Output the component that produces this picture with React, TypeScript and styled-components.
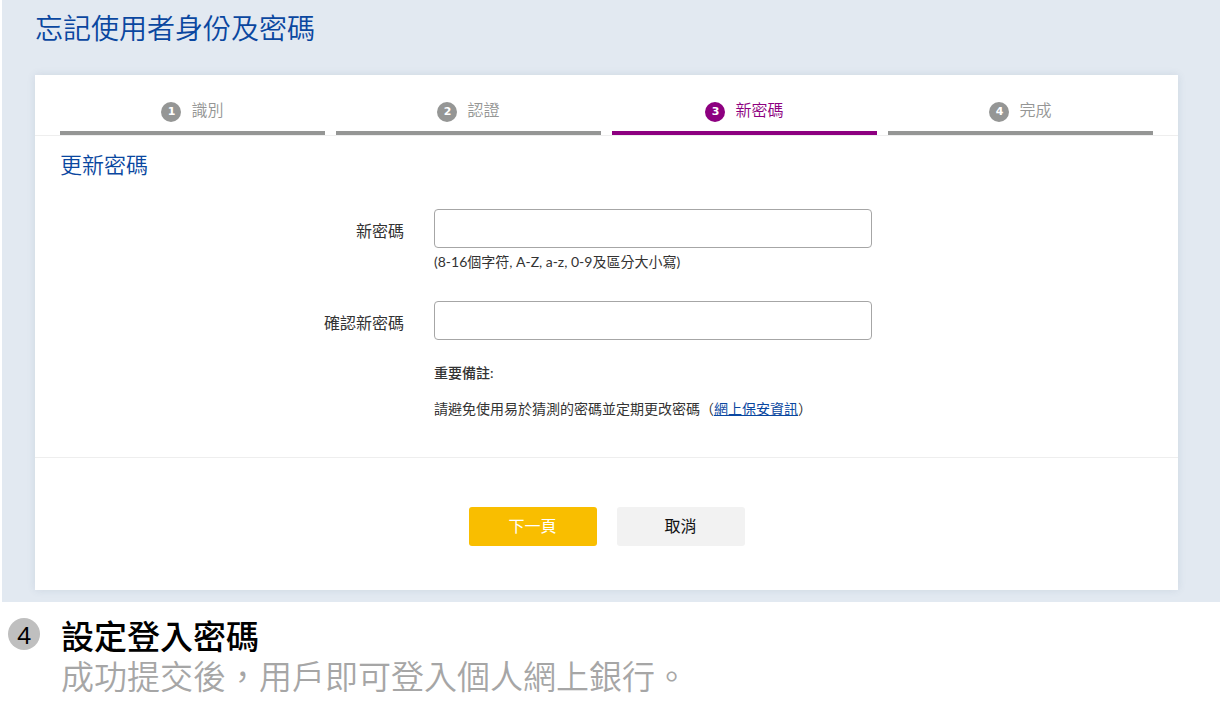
import React from 'react';
import styled, { createGlobalStyle } from 'styled-components';

const GlobalStyle = createGlobalStyle`
  *, *::before, *::after {
    box-sizing: border-box;
  }
  body {
    margin: 0;
    background: #ffffff;
    color: #333333;
    font-family: Lato, "Noto Sans CJK TC", sans-serif;
    font-size: 14px;
    line-height: 20px;
  }
`;

const Screen = styled.main`
  margin-left: 2px;
  padding: 8px 42px 12px 33px;
  background: #e2e9f1;
`;

const PageTitle = styled.h1`
  margin: 0 0 27px;
  color: #0a47a0;
  font-size: 28px;
  font-weight: 350;
  line-height: 40px;
`;

const Card = styled.form`
  background: #ffffff;
  box-shadow: 0 0 8px rgba(60, 90, 120, 0.12);
`;

const Steps = styled.ol`
  display: grid;
  grid-template-columns: repeat(4, 1fr);
  gap: 11px;
  margin: 0;
  padding: 0 25px;
  border-bottom: 1px solid #eeeeee;
  list-style: none;
`;

const Step = styled.li<{ $active?: boolean }>`
  display: flex;
  justify-content: center;
  gap: 10px;
  height: 60px;
  padding-top: 25px;
  border-bottom: 4px solid ${(p) => (p.$active ? '#8d0080' : '#959695')};
  color: ${(p) => (p.$active ? '#8d0080' : '#959695')};
  font-size: 16px;
  font-weight: 350;
`;

const StepNumber = styled.span<{ $active?: boolean }>`
  width: 20px;
  height: 20px;
  margin-top: 2px;
  border-radius: 50%;
  background: ${(p) => (p.$active ? '#8d0080' : '#959695')};
  color: #ffffff;
  font-family: "DejaVu Sans", sans-serif;
  font-size: 11px;
  font-weight: 700;
  line-height: 19px;
  text-align: center;
`;

const Body = styled.div`
  padding: 13px 25px 38px;
`;

const Heading = styled.h2`
  margin: 0 0 28px;
  color: #0a47a0;
  font-size: 22px;
  font-weight: 350;
  line-height: 32px;
`;

const Row = styled.div`
  display: grid;
  grid-template-columns: 344fr 438fr 251fr;
  column-gap: 30px;
`;

const FieldLabel = styled.label`
  padding-top: 12px;
  font-size: 16px;
  text-align: right;
`;

const PasswordInput = styled.input`
  display: block;
  width: 100%;
  height: 39px;
  padding: 0 12px;
  border: 1px solid #a6a6a6;
  border-radius: 4px;
  background: #ffffff;
  font: inherit;
`;

const Hint = styled.p`
  margin: 4px 0 29px;
`;

const Notes = styled.div`
  grid-column: 2 / 4;
  padding-top: 23px;
`;

const NoteTitle = styled.p`
  margin: 0 0 16px;
  font-weight: 500;
`;

const NoteText = styled.p`
  margin: 0;
`;

const NoteLink = styled.a`
  color: #0a47a0;
  text-decoration: underline;
`;

const Actions = styled.div`
  display: flex;
  justify-content: center;
  gap: 20px;
  padding: 49px 25px 44px;
  border-top: 1px solid #eeeeee;
`;

const ActionButton = styled.button<{ $primary?: boolean }>`
  width: 128px;
  height: 39px;
  padding: 0 0 2px;
  border: 0;
  border-radius: 3px;
  background: ${(p) => (p.$primary ? '#f9be00' : '#f2f2f2')};
  color: ${(p) => (p.$primary ? '#ffffff' : '#111111')};
  font-family: inherit;
  font-size: 16px;
  line-height: 20px;
`;

const Caption = styled.section`
  display: flex;
  gap: 21px;
  padding: 16px 8px;
`;

const CaptionNumber = styled.span`
  flex: none;
  width: 32px;
  height: 32px;
  border-radius: 50%;
  background: #bfbfbf;
  color: #000000;
  font-family: "Noto Sans", sans-serif;
  font-size: 24px;
  line-height: 34px;
  text-align: center;
`;

const CaptionBody = styled.div`
  margin-top: -2px;
`;

const CaptionTitle = styled.h2`
  margin: 0;
  color: #000000;
  font-size: 33px;
  font-weight: 500;
  line-height: 40px;
`;

const CaptionText = styled.p`
  margin: 0;
  color: #a6a6a6;
  font-size: 33px;
  font-weight: 350;
  line-height: 40px;
`;

const steps = ['識別', '認證', '新密碼', '完成'];
const currentStep = 2;

export default function App() {
  return (
    <>
      <GlobalStyle />
      <Screen>
        <PageTitle>忘記使用者身份及密碼</PageTitle>
        <Card>
          <Steps>
            {steps.map((name, i) => (
              <Step key={name} $active={i === currentStep}>
                <StepNumber $active={i === currentStep}>{i + 1}</StepNumber>
                <span>{name}</span>
              </Step>
            ))}
          </Steps>
          <Body>
            <Heading>更新密碼</Heading>
            <Row>
              <FieldLabel htmlFor="new-password">新密碼</FieldLabel>
              <div>
                <PasswordInput id="new-password" type="password" aria-describedby="password-hint" />
                <Hint id="password-hint">(8-16個字符, A-Z, a-z, 0-9及區分大小寫)</Hint>
              </div>
            </Row>
            <Row>
              <FieldLabel htmlFor="confirm-password">確認新密碼</FieldLabel>
              <PasswordInput id="confirm-password" type="password" />
              <Notes>
                <NoteTitle>重要備註:</NoteTitle>
                <NoteText>
                  請避免使用易於猜測的密碼並定期更改密碼（<NoteLink href="#security">網上保安資訊</NoteLink>）
                </NoteText>
              </Notes>
            </Row>
          </Body>
          <Actions>
            <ActionButton type="submit" $primary>下一頁</ActionButton>
            <ActionButton type="button">取消</ActionButton>
          </Actions>
        </Card>
      </Screen>
      <Caption>
        <CaptionNumber>4</CaptionNumber>
        <CaptionBody>
          <CaptionTitle>設定登入密碼</CaptionTitle>
          <CaptionText>成功提交後，用戶即可登入個人網上銀行。</CaptionText>
        </CaptionBody>
      </Caption>
    </>
  );
}
